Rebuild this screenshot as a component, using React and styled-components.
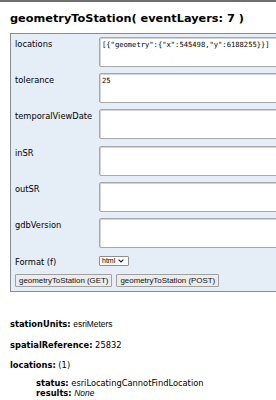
import React from "react";
import styled, { createGlobalStyle } from "styled-components";

const Global = createGlobalStyle`
  html, body { margin: 0; padding: 0; background: #fff; }
  body { overflow: hidden; font-family: "DejaVu Sans", Verdana, sans-serif; color: #000; }
`;

const Page = styled.div`
  width: 276px;
  height: 400px;
  overflow: hidden;
`;

const TopRule = styled.div`
  height: 2px;
  background: #6e6e6e;
`;

const Title = styled.h2`
  margin: 10px 0 8px 10px;
  font-size: 11.3px;
  line-height: 13px;
  font-weight: bold;
  white-space: nowrap;
`;

const FormBox = styled.div`
  margin-left: 10px;
  width: 520px;
  background: #e5eef7;
  border: 1px solid #8c8c8c;
  padding: 3px 4px 4px 4px;
  display: grid;
  grid-template-columns: 84px 1fr;
  row-gap: 6.2px;
  align-items: start;
`;

const Label = styled.div`
  font-size: 8.3px;
  line-height: 10px;
  padding-top: ${(p) => p.$top || 2}px;
  white-space: nowrap;
`;

const Area = styled.div`
  box-sizing: border-box;
  height: 30px;
  width: 420px;
  background: #fff;
  border: 1px solid #a8a8a8;
  border-radius: 2px;
  box-shadow: inset 1px 1px 0 #d4d4d4;
  padding: 2px 2px;
  font-family: "DejaVu Sans Mono", "Liberation Mono", monospace;
  font-size: 7.15px;
  line-height: 9px;
  white-space: pre;
`;

const SelectBox = styled.div`
  margin-top: 2px;
  box-sizing: border-box;
  width: 30px;
  height: 10px;
  background: #fff;
  border: 1px solid #8f8f8f;
  border-radius: 1px;
  display: flex;
  align-items: center;
  gap: 3px;
  padding-left: 2px;
  font-family: "Liberation Sans", Arial, sans-serif;
  font-size: 7px;
  line-height: 8px;
`;

const ButtonRow = styled.div`
  grid-column: 1 / -1;
  display: flex;
  gap: 4px;
  margin-top: 1px;
`;

const Btn = styled.div`
  box-sizing: border-box;
  height: 13px;
  padding: 0 3px;
  background: #ececec;
  border: 1px solid #a0a0a0;
  border-radius: 1px;
  font-family: "Liberation Sans", Arial, sans-serif;
  font-size: 7.9px;
  line-height: 11px;
  white-space: nowrap;
  color: #111;
`;

const Results = styled.div`
  padding: 27px 0 0 10px;
`;

const Line = styled.p`
  margin: 0 0 ${(p) => p.$gap ?? 10.5}px ${(p) => p.$indent || 0}px;
  font-size: 8.3px;
  line-height: ${(p) => p.$lh || 10}px;
  white-space: nowrap;
`;

const Key = styled.b`
  font-weight: bold;
`;

const ArialVal = styled.span`
  font-family: "Liberation Sans", Arial, sans-serif;
  font-size: 8.4px;
  font-style: ${(p) => (p.$italic ? "italic" : "normal")};
`;

const Chevron = () => (
  <svg width="6" height="4" viewBox="0 0 6 4">
    <path d="M0.6 0.6 L3 3 L5.4 0.6" fill="none" stroke="#222" strokeWidth="1.2" />
  </svg>
);

const fields = [
  ["locations", '[{"geometry":{"x":545498,"y":6188255}}]'],
  ["tolerance", "25"],
  ["temporalViewDate", ""],
  ["inSR", ""],
  ["outSR", ""],
  ["gdbVersion", ""],
];

export default function App() {
  return (
    <Page>
      <Global />
      <TopRule />
      <Title>geometryToStation( eventLayers: 7 )</Title>
      <FormBox>
        {fields.map(([l, v]) => (
          <React.Fragment key={l}>
            <Label>{l}</Label>
            <Area>{v}</Area>
          </React.Fragment>
        ))}
        <Label $top={3}>Format (f)</Label>
        <SelectBox>
          <span>html</span>
          <Chevron />
        </SelectBox>
        <ButtonRow>
          <Btn>geometryToStation (GET)</Btn>
          <Btn>geometryToStation (POST)</Btn>
        </ButtonRow>
      </FormBox>
      <Results>
        <Line>
          <Key>stationUnits:</Key> <ArialVal>esriMeters</ArialVal>
        </Line>
        <Line>
          <Key>spatialReference:</Key> 25832
        </Line>
        <Line $gap={8}>
          <Key>locations:</Key> (1)
        </Line>
        <Line $indent={26} $gap={0}>
          <Key>status:</Key> esriLocatingCannotFindLocation
        </Line>
        <Line $indent={26} $gap={0}>
          <Key>results:</Key> <ArialVal $italic>None</ArialVal>
        </Line>
      </Results>
    </Page>
  );
}
